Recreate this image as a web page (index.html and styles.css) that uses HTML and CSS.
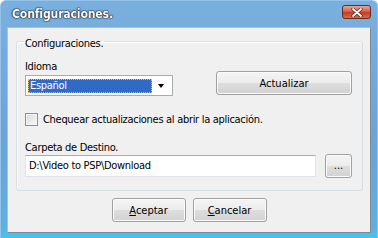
FILE: index.html
```html
<!DOCTYPE html>
<html lang="es">

<head>
    <meta charset="UTF-8">
    <meta name="viewport" content="width=device-width, initial-scale=1.0">
    <title>Configuraciones.</title>
    <link rel="stylesheet" href="styles.css">
</head>

<body>
    <div class="window">
        <div class="titlebar">
            <span class="title">Configuraciones.</span>
            <span class="close-button">
                <svg width="12" height="9" viewBox="0 0 12 9">
                    <path d="M2 1 L10 8 M10 1 L2 8" stroke="#5a2418" stroke-width="3.2" stroke-linecap="round" />
                    <path d="M2 1 L10 8 M10 1 L2 8" stroke="#fff" stroke-width="1.8" stroke-linecap="round" />
                </svg>
            </span>
        </div>

        <div class="client">
            <fieldset class="group">
                <legend>Configuraciones.</legend>

                <div class="lang-row">
                    <div class="lang-col">
                        <div class="label">Idioma</div>
                        <div class="combo">
                            <span class="combo-value">Español</span>
                            <span class="combo-arrow"></span>
                        </div>
                    </div>
                    <button class="btn btn-update">Actualizar</button>
                </div>

                <div class="check-row">
                    <span class="checkbox"></span>
                    <span>Chequear actualizaciones al abrir la aplicación.</span>
                </div>

                <div class="label folder-label">Carpeta de Destino.</div>
                <div class="folder-row">
                    <div class="textbox">D:\Video to PSP\Download</div>
                    <button class="btn btn-browse">...</button>
                </div>
            </fieldset>

            <div class="actions">
                <button class="btn btn-action"><u>A</u>ceptar</button>
                <button class="btn btn-action"><u>C</u>ancelar</button>
            </div>
        </div>
    </div>
</body>

</html>
```

FILE: styles.css
```css
body {
    margin: 0;
    background-color: #fff;
    font-family: "DejaVu Sans Condensed", "DejaVu Sans", sans-serif;
    font-stretch: condensed;
    font-size: 11px;
    letter-spacing: -0.3px;
    color: #000;
}

.window {
    width: 378px;
    height: 238px;
    box-sizing: border-box;
    padding: 0 6px 4px 6px;
    display: flex;
    flex-direction: column;
    background: linear-gradient(#7ab0de, #6ca4d6 60%, #5fb0de 96%, #3fc6f0);
    border: 1px solid #94c2e8;
    border-bottom-color: #3ec8f2;
    border-radius: 6px 6px 0 0;
}

.titlebar {
    height: 26px;
    display: flex;
    justify-content: space-between;
    align-items: flex-start;
    padding-left: 5px;
}

.title {
    margin-top: 6px;
    font-weight: bold;
    font-size: 12px;
    letter-spacing: -0.1px;
    color: #fff;
    text-shadow: 0 0 1px #000, 0 0 1px #000, 0 0 2px #203040;
}

.close-button {
    margin-top: 4px;
    width: 27px;
    height: 12px;
    border: 1px solid #6b2c20;
    border-radius: 3px;
    background: linear-gradient(#e8a796, #d6604a 45%, #c0401f 55%, #d86a4c);
    display: flex;
    justify-content: center;
    align-items: center;
}

.client {
    flex: 1;
    background-color: #f0f0f0;
    border: 1px solid #a9bfd6;
    border-right-color: #7d8b99;
    border-bottom-color: #7d8b99;
    display: flex;
    flex-direction: column;
}

.group {
    margin: 5px 7px 0 8px;
    padding: 0 10px 12px 8px;
    border: 1px solid #d5dfe5;
    border-radius: 3px;
    box-shadow: inset 1px 1px 0 #fff;
}

.group legend {
    padding: 4px 1px 0 1px;
    margin-left: -1px;
    line-height: 13px;
}

.label {
    line-height: 13px;
}

.lang-row {
    margin-top: 10px;
    display: flex;
    justify-content: space-between;
    align-items: flex-end;
}

.lang-col {
    display: flex;
    flex-direction: column;
    gap: 2px;
}

.combo {
    width: 144px;
    height: 19px;
    border: 1px solid #a5acb5;
    background-color: #fff;
    display: flex;
    align-items: center;
    padding-left: 2px;
}

.combo-value {
    width: 121px;
    height: 12px;
    line-height: 12px;
    padding-left: 1px;
    background-color: #3169c6;
    color: #fff;
    border: 1px dotted #e8c060;
}

.combo-arrow {
    margin-left: 6px;
    border-left: 3.5px solid transparent;
    border-right: 3.5px solid transparent;
    border-top: 4px solid #000;
}

.btn {
    font: inherit;
    color: #000;
    padding: 0;
    border: 1px solid #a0a0a0;
    border-radius: 3px;
    background: linear-gradient(#f4f4f4, #ececec 50%, #dedede 50%, #d2d2d2);
    box-shadow: inset 0 0 0 1px #fbfbfb;
}

.btn-update {
    width: 136px;
    height: 24px;
    margin-bottom: 1px;
}

.check-row {
    margin-top: 17px;
    display: flex;
    align-items: center;
    gap: 5px;
    line-height: 13px;
}

.checkbox {
    width: 11px;
    height: 11px;
    border: 1px solid #8e8f8f;
    background: linear-gradient(135deg, #dcdcdc, #f6f6f6);
    box-shadow: inset 0 0 0 1px #f4f4f4;
}

.folder-label {
    margin-top: 15px;
}

.folder-row {
    display: flex;
    align-items: center;
    gap: 9px;
}

.textbox {
    flex: 1;
    height: 20px;
    line-height: 20px;
    padding-left: 3px;
    background-color: #fff;
    border: 1px solid #e2e3ea;
    border-top-color: #abadb3;
}

.btn-browse {
    width: 27px;
    height: 24px;
    line-height: 14px;
    letter-spacing: 0;
}

.actions {
    margin-top: 7px;
    display: flex;
    justify-content: center;
    gap: 7px;
}

.btn-action {
    width: 74px;
    height: 24px;
}
```
